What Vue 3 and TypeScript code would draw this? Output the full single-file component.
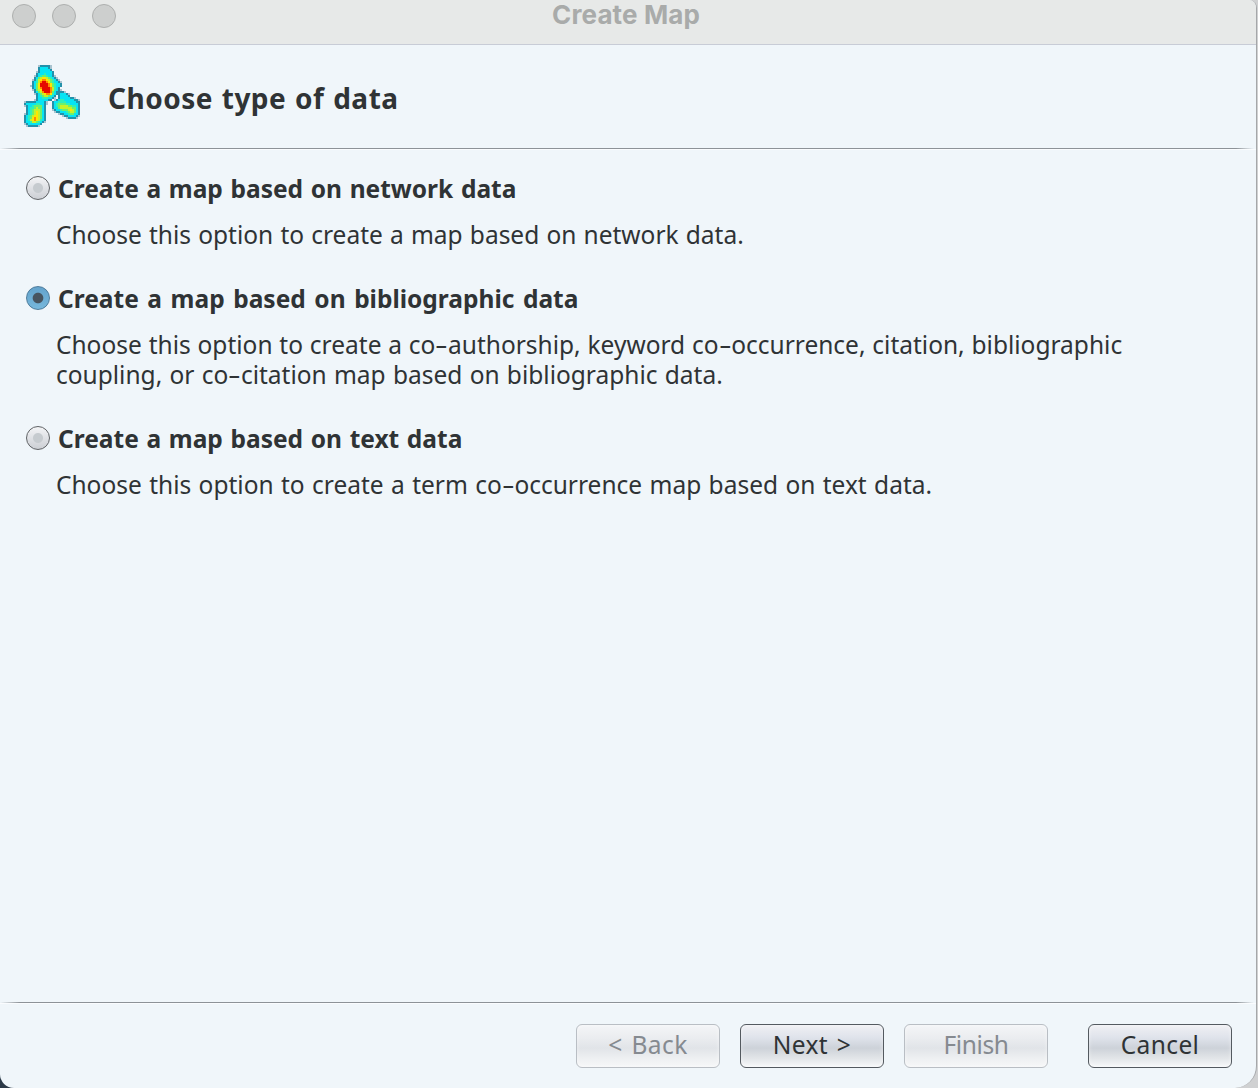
<script setup lang="ts">
import { ref } from 'vue'

interface Option { id: string; title: string; lines: string[] }

const options: Option[] = [
  { id: 'network', title: 'Create a map based on network data', lines: ['Choose this option to create a map based on network data.'] },
  {
    id: 'biblio', title: 'Create a map based on bibliographic data',
    lines: [
      'Choose this option to create a co-authorship, keyword co-occurrence, citation, bibliographic',
      'coupling, or co-citation map based on bibliographic data.',
    ],
  },
  { id: 'text', title: 'Create a map based on text data', lines: ['Choose this option to create a term co-occurrence map based on text data.'] },
]
const selected = ref('biblio')
const parts = (s: string) => s.split(/(-)/)

// Density map logo: one letter per cell, from the cool rim to the hot core.
const palette: Record<string, string> = {
  g: '#a9c3cf', b: '#2391aa', c: '#06e4f4', e: '#2ff0b8', G: '#6cf06c',
  y: '#c4f22a', Y: '#ffe600', o: '#ff8a00', r: '#e60a00',
}
const rows = [
  '.......gbbbbbg',
  '.......bccccbg',
  '.......bcccccb',
  '......gbccccccb',
  '......bcccecccb',
  '.....gbceGGeccbg',
  '.....bcGyYYyGecbg',
  '....gbeyYooYyGecbg',
  '....bceyorroYGeccbg',
  '....bcGYrrrroYGeccb',
  '...gbcGYrrrroYGeccb',
  '....bcGYorrrroyecb',
  '....gbGyYrrrroyecbg',
  '.....bcGyorrroGcbbbbg',
  '.....gbcGyYooYecbbcccbg',
  '......bceGyyGecb.bccccb',
  '......bcceeeccbg.bcccccbbg',
  '.....gbcccccbb.gbceecccccbbg',
  'gbbbbbccccbg..bcceeeecccccbb',
  'bccccceeccbg..bceGGGGeeccccb',
  'gbcceGGGGcb...bceGyyyyGGeecb',
  '.bceeGyGGcb...bccGyyyyyyGGcb',
  '.bceGyyyGcb...gbcceGGGyYyGcb',
  '.bceGyYyGcb....gbbccceGyyGcb',
  'gbceGyYyGcb......gbbcceGGccb',
  'bceGyYYyGcb........gbbccccbg',
  'bceGYoYyGcb..........gbbbbg',
  'bceyYoYyecb',
  'bcceyyGecbg',
  'gbccccccb',
  '.gbbbbbg',
]
const cells = rows.flatMap((row, y) =>
  [...row].map((k, x) => ({ x, y, fill: palette[k] })).filter(c => c.fill))
</script>

<template>
  <div class="desktop">
    <div class="window">
      <header class="titlebar">
        <i class="dot" /><i class="dot" /><i class="dot" />
        <span class="caption">Create Map</span>
      </header>
      <section class="heading">
        <svg class="logo" viewBox="0 0 28 31" width="56" height="62" shape-rendering="crispEdges">
          <rect v-for="(c, i) in cells" :key="i" :x="c.x" :y="c.y" width="1" height="1" :fill="c.fill" />
        </svg>
        <h1>Choose type of data</h1>
      </section>
      <div class="rule" />
      <main>
        <section v-for="o in options" :key="o.id" class="option">
          <div class="choice" @click="selected = o.id">
            <span class="radio" :class="{ on: selected === o.id }" />
            <b :class="`title-${o.id}`">{{ o.title }}</b>
          </div>
          <div class="desc">
            <div v-for="(l, i) in o.lines" :key="i" class="line" :class="`${o.id}-${i}`"><template v-for="(p, j) in parts(l)" :key="j"><span v-if="p === '-'" class="hy">-</span><template v-else>{{ p }}</template></template></div>
          </div>
        </section>
      </main>
      <div class="rule" />
      <footer>
        <button disabled>&lt; Back</button>
        <button>Next &gt;</button>
        <button disabled class="finish">Finish</button>
        <button class="cancel">Cancel</button>
      </footer>
    </div>
  </div>
</template>

<style>
body { margin: 0; overflow: hidden; }
</style>
<style scoped>
* { box-sizing: border-box; }
.desktop { width: 1258px; height: 1088px; background: linear-gradient(90deg, #2c3a48 0 600px, #d0d1d2 600px); overflow: hidden; font-family: "Noto Sans", "Open Sans", sans-serif; color: #2f3335; }
.window { width: 1257px; height: 1088px; display: flex; flex-direction: column; background: #f0f6fa; border-right: 1px solid #a5a7a9; border-radius: 0 8px 22px 14px; overflow: hidden; }
.titlebar { height: 45px; flex: none; display: flex; background: #e7e9e8; border-bottom: 1px solid #c8ccd6; padding: 4px 0 0 12px; gap: 16px; }
.dot { width: 24px; height: 24px; border-radius: 50%; background: #cdcfce; border: 1px solid #adafae; }
.caption { margin-left: 420px; margin-top: -4px; font: bold 26px/30px Inter, sans-serif; color: #a9abaa; white-space: nowrap; letter-spacing: .15px; }
.heading { height: 103px; flex: none; display: flex; padding: 20px 0 0 24px; }
.logo { flex: none; }
h1 { margin: 12px 0 0 28px; font-size: 28px; line-height: 42px; letter-spacing: .5px; word-spacing: 1px; white-space: nowrap; }
.rule { height: 3px; flex: none; background: linear-gradient(90deg, transparent, #8d9297 20px, #8d9297 1236px, transparent 1254px) 0 0 / 100% 1px no-repeat, linear-gradient(#fafcfe, #fafcfe) 0 1px / 100% 1px no-repeat; }
main { flex: 1; padding: 24px 0 0 26px; }
.option { margin-bottom: 34px; }
.choice { height: 30px; display: flex; gap: 8px; }
.radio { width: 24px; height: 24px; margin-top: 1px; border-radius: 50%; border: 1px solid #606366; background: radial-gradient(circle, #c6cbcf 0 4.5px, transparent 5.5px), linear-gradient(#f3f4f6, #cccfd4); }
.radio.on { border-color: #4f7c9b; background: radial-gradient(circle, #47545f 0 4.8px, transparent 5.8px), linear-gradient(#64a3cc, #76b7db); }
.choice b { font-size: 24.5px; line-height: 30px; margin-top: -1px; white-space: nowrap; word-spacing: 1.3px; }
.choice .title-biblio { word-spacing: 2.2px; }
.desc { margin: 16px 0 0 30px; font-size: 24.5px; }
.line { height: 30px; line-height: 28px; white-space: nowrap; }
.network-0 { word-spacing: .8px; }
.biblio-0 { word-spacing: .45px; }
.biblio-1 { word-spacing: .9px; }
.text-0 { word-spacing: 1px; }
.hy { display: inline-block; width: 12.6px; text-align: center; transform: scaleX(1.6); }
footer { height: 83px; flex: none; display: flex; justify-content: flex-end; gap: 20px; padding: 19px 24px 0 0; }
button { width: 144px; height: 44px; padding: 0 0 2px; border: 1px solid #545a60; border-radius: 6px; background: linear-gradient(#f0f0f4, #dfe3eb 30%, #cdd2d9 55%, #e3e6e9 80%, #f8f9fa); font: 24.5px/38px "Noto Sans", sans-serif; letter-spacing: .4px; word-spacing: 2px; color: #2f3335; box-shadow: inset 0 0 4px #ffffff80; }
button:disabled { border-color: #b9bec4; color: #858a90; background: linear-gradient(#f4f5f7, #ebedf0 30%, #e1e4e8 55%, #eef0f2 80%, #f6f7f8); }
button.finish { letter-spacing: -.4px; }
.cancel { margin-left: 20px; }
</style>
